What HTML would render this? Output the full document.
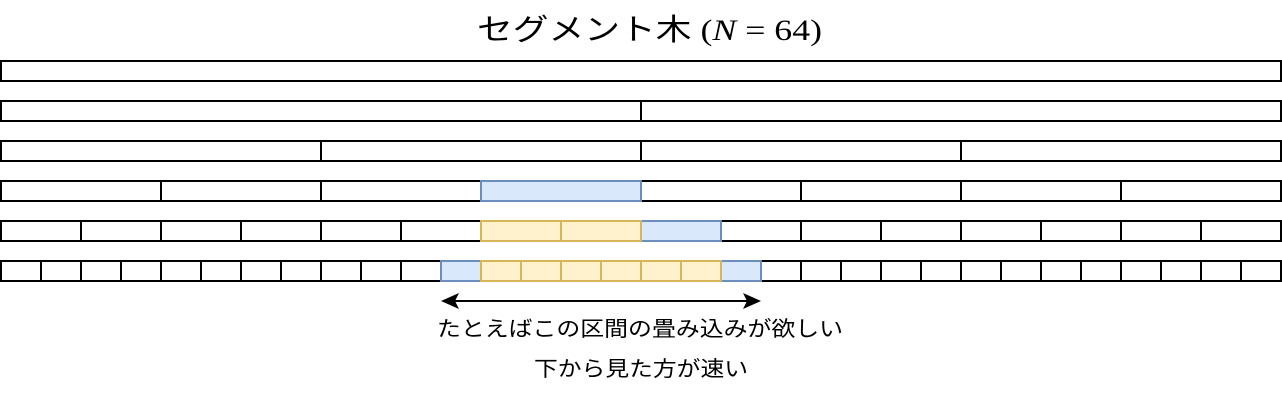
<!DOCTYPE html>
<html><head><meta charset="utf-8"><style>
html,body{margin:0;padding:0;background:#fff;width:1282px;height:400px;overflow:hidden}
</style></head><body>
<svg width="1282" height="400" xmlns="http://www.w3.org/2000/svg">
<text x="477" y="40" font-size="30" font-family="Liberation Serif, WenQuanYi Zen Hei, serif" textLength="345" lengthAdjust="spacingAndGlyphs"><tspan font-family="WenQuanYi Zen Hei, Noto Sans CJK JP, sans-serif">セグメント木</tspan> (<tspan font-style="italic">N</tspan> = 64)</text>
<g fill="#fff" stroke="#000" stroke-width="2">
<rect x="1" y="61" width="1280" height="20"/>
<rect x="1" y="101" width="640" height="20"/><rect x="641" y="101" width="640" height="20"/>
<rect x="1" y="141" width="320" height="20"/><rect x="321" y="141" width="320" height="20"/><rect x="641" y="141" width="320" height="20"/><rect x="961" y="141" width="320" height="20"/>
<rect x="1" y="181" width="160" height="20"/><rect x="161" y="181" width="160" height="20"/><rect x="321" y="181" width="160" height="20"/><rect x="481" y="181" width="160" height="20"/><rect x="641" y="181" width="160" height="20"/><rect x="801" y="181" width="160" height="20"/><rect x="961" y="181" width="160" height="20"/><rect x="1121" y="181" width="160" height="20"/>
</g>
<g fill="#fff" stroke="#000" stroke-width="2" id="r5"></g>
<g fill="#fff" stroke="#000" stroke-width="2" id="r6"></g>
<g stroke-width="2">
<rect x="481" y="181" width="160" height="20" fill="#dae8fc" stroke="#6c8ebf"/>
<rect x="641" y="221" width="80" height="20" fill="#dae8fc" stroke="#6c8ebf"/>
<rect x="481" y="221" width="80" height="20" fill="#fff2cc" stroke="#d6b656"/>
<rect x="561" y="221" width="80" height="20" fill="#fff2cc" stroke="#d6b656"/>
<rect x="441" y="261" width="40" height="20" fill="#dae8fc" stroke="#6c8ebf"/>
<rect x="721" y="261" width="40" height="20" fill="#dae8fc" stroke="#6c8ebf"/>
<rect x="481" y="261" width="40" height="20" fill="#fff2cc" stroke="#d6b656"/>
<rect x="521" y="261" width="40" height="20" fill="#fff2cc" stroke="#d6b656"/>
<rect x="561" y="261" width="40" height="20" fill="#fff2cc" stroke="#d6b656"/>
<rect x="601" y="261" width="40" height="20" fill="#fff2cc" stroke="#d6b656"/>
<rect x="641" y="261" width="40" height="20" fill="#fff2cc" stroke="#d6b656"/>
<rect x="681" y="261" width="40" height="20" fill="#fff2cc" stroke="#d6b656"/>
</g>
<line x1="452" y1="301" x2="750" y2="301" stroke="#000" stroke-width="2"/>
<path d="M441 301 L459 293 L455 301 L459 309 Z" fill="#000"/>
<path d="M761 301 L743 293 L747 301 L743 309 Z" fill="#000"/>
<g font-family="WenQuanYi Zen Hei, Noto Sans CJK JP, sans-serif" font-size="21" fill="#000">
<text x="437" y="336" textLength="406" lengthAdjust="spacingAndGlyphs">たとえばこの区間の畳み込みが欲しい</text>
<text x="534" y="376" textLength="214" lengthAdjust="spacingAndGlyphs">下から見た方が速い</text>
</g>
</svg>
<script>
var ns="http://www.w3.org/2000/svg";
function row(id,y,w){var g=document.getElementById(id);for(var x=1;x<1281;x+=w){var r=document.createElementNS(ns,"rect");r.setAttribute("x",x);r.setAttribute("y",y);r.setAttribute("width",w);r.setAttribute("height",20);g.appendChild(r);}}
row("r5",221,80);row("r6",261,40);
</script>
</body></html>
